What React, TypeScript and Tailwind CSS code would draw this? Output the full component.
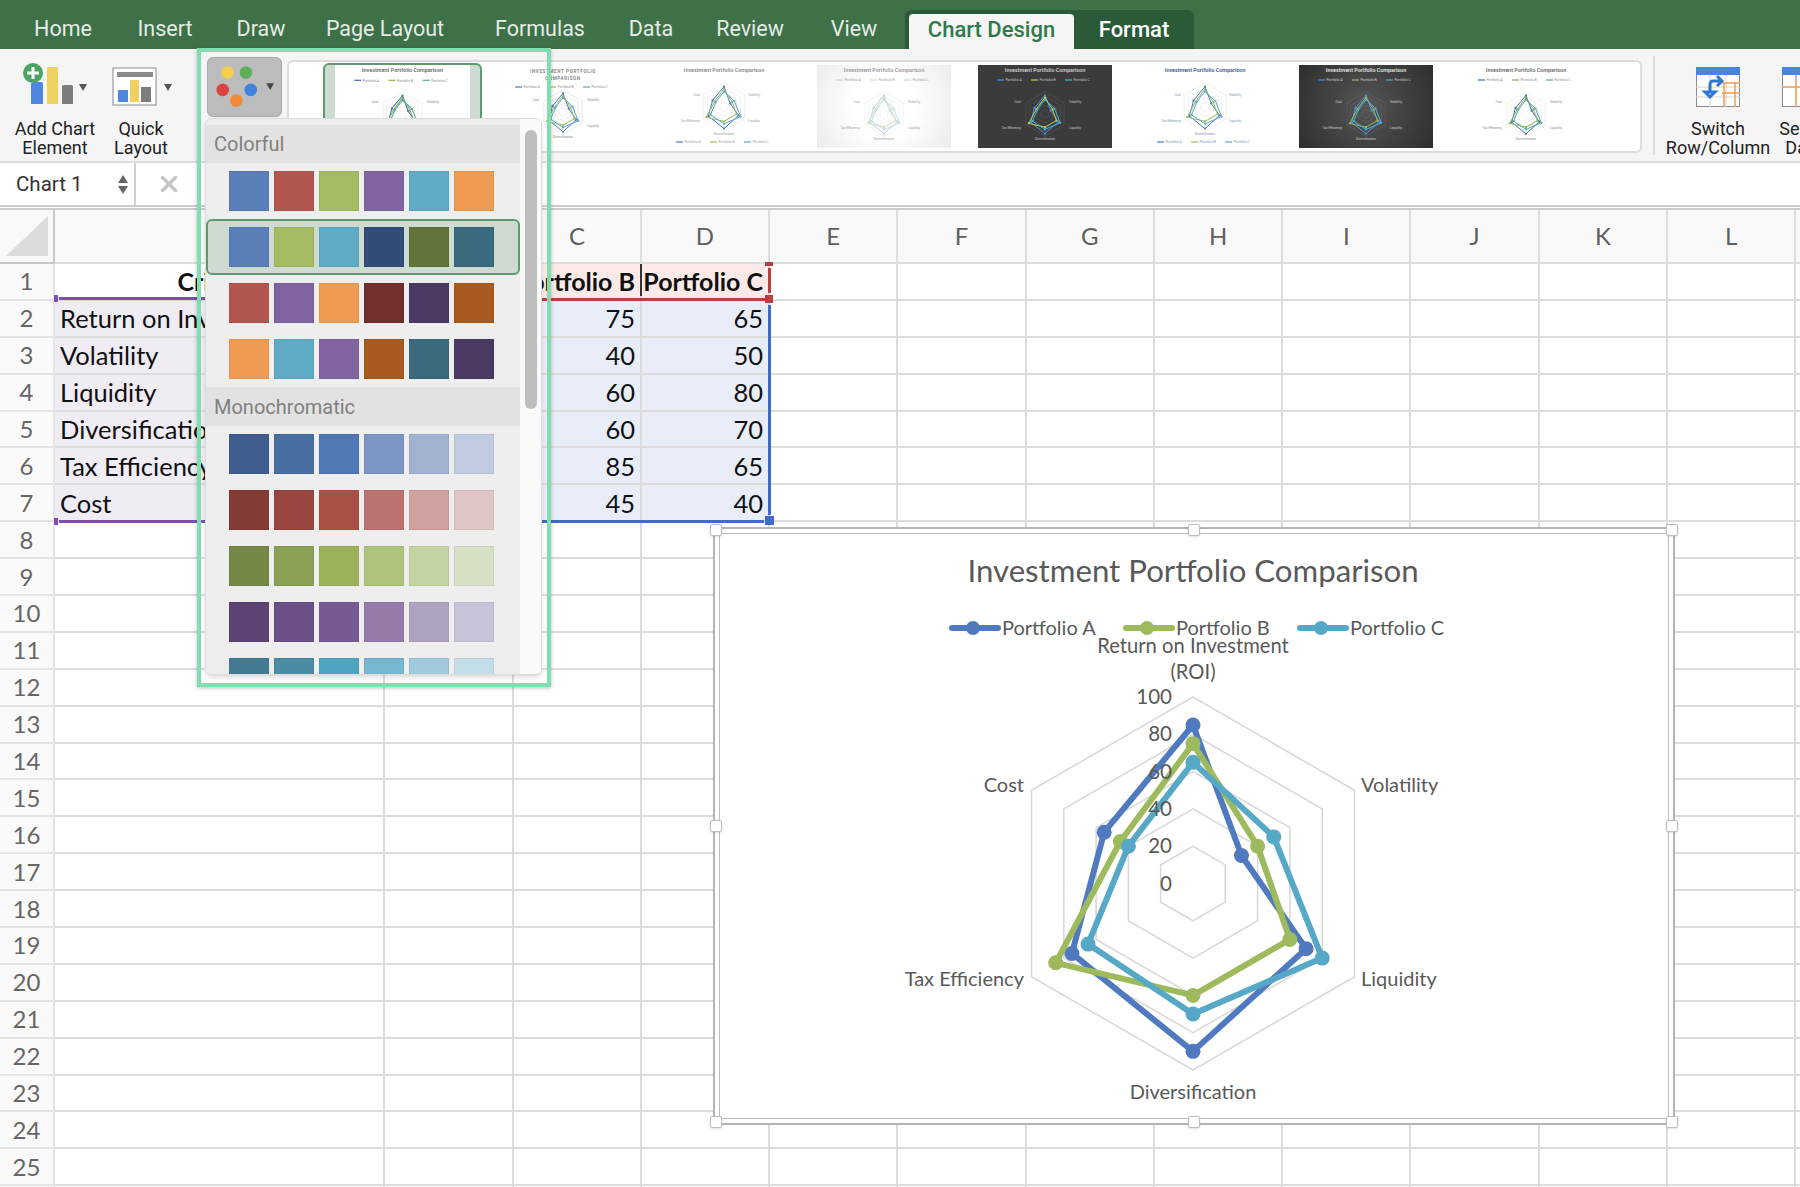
import { X } from 'lucide-react';

const TABS = [
  { label: 'Home', w: 'w-[94px]' },
  { label: 'Insert', w: 'w-[110px]' },
  { label: 'Draw', w: 'w-[82px]' },
  { label: 'Page Layout', w: 'w-[166px]' },
  { label: 'Formulas', w: 'w-[144px]' },
  { label: 'Data', w: 'w-[78px]' },
  { label: 'Review', w: 'w-[120px]' },
  { label: 'View', w: 'w-[88px]' },
];

const COLORFUL = [
  ['#5a7fb8', '#b25650', '#a3bc63', '#7f649f', '#5faac5', '#ef9c52'],
  ['#5a7fb8', '#a3bc63', '#5faac5', '#324c77', '#62743a', '#396a7d'],
  ['#b25650', '#7f649f', '#ef9c52', '#752e2e', '#4a3a63', '#a95a1e'],
  ['#ef9c52', '#5faac5', '#7f649f', '#a95a1e', '#396a7d', '#4a3a63'],
];

const MONO = [
  ['#3f5d8f', '#476f9f', '#4f78b5', '#7c95c5', '#a2b3d2', '#c2cce1'],
  ['#843b36', '#9a4640', '#ab5047', '#bc7270', '#d0a1a0', '#e0c5c6'],
  ['#768845', '#8aa055', '#9cb25a', '#aec47c', '#c3d3a2', '#d6e0c4'],
  ['#5b4373', '#6a4f88', '#775a94', '#957ca8', '#ada3c0', '#c9c3d9'],
  ['#437c92', '#4a8ca6', '#4ea5c1', '#78b5d0', '#a0c9dc', '#c3dde9'],
];

const COLUMNS = ['A', 'B', 'C', 'D', 'E', 'F', 'G', 'H', 'I', 'J', 'K', 'L', 'M'];
const ROWS = Array.from({ length: 26 }, (_, i) => i + 1);

const SHEET: Record<number, string[]> = {
  1: ['Criteria', 'Portfolio A', 'Portfolio B', 'Portfolio C'],
  2: ['Return on Investment (ROI)', '85', '75', '65'],
  3: ['Volatility', '30', '40', '50'],
  4: ['Liquidity', '70', '60', '80'],
  5: ['Diversification', '90', '60', '70'],
  6: ['Tax Efficiency', '75', '85', '65'],
  7: ['Cost', '55', '45', '40'],
};

const SERIES = [
  { name: 'Portfolio A', color: '#4f7abf', values: [85, 30, 70, 90, 75, 55] },
  { name: 'Portfolio B', color: '#9dba5c', values: [75, 40, 60, 60, 85, 45] },
  { name: 'Portfolio C', color: '#55a8c6', values: [65, 50, 80, 70, 65, 40] },
];

function point(cx: number, cy: number, r: number, i: number) {
  const a = (Math.PI / 3) * i;
  return [cx + r * Math.sin(a), cy - r * Math.cos(a)];
}

function hexPath(cx: number, cy: number, r: number) {
  return [0, 1, 2, 3, 4, 5].map((i) => point(cx, cy, r, i).map((n) => n.toFixed(1)).join(',')).join(' ');
}

const THUMBS = [
  { bg: 'bg-white', title: '#8a8a8a', axis: '#c9c9c9', text: '#8a8a8a', legend: 'top', upper: true, colors: ['#4f7abf', '#9dba5c', '#55a8c6'] },
  { bg: 'bg-white', title: '#8a8a8a', axis: '#d9d9d9', text: '#9a9a9a', legend: 'bottom', upper: false, colors: ['#4f7abf', '#9dba5c', '#55a8c6'] },
  { bg: 'bg-[radial-gradient(circle,#ffffff_40%,#ececec_100%)]', title: '#9a9a9a', axis: '#dddddd', text: '#a0a0a0', legend: 'top', upper: false, colors: ['#c3d3e8', '#d8e2bd', '#bfe0ea'] },
  { bg: 'bg-[#3b3b3b]', title: '#d0d0d0', axis: '#666666', text: '#c8c8c8', legend: 'top', upper: false, colors: ['#4f8fe0', '#c3cf4a', '#45b5dd'] },
  { bg: 'bg-white', title: '#38598f', axis: '#d9d9d9', text: '#7d93b5', legend: 'bottom', upper: false, colors: ['#4f7abf', '#9dba5c', '#55a8c6'] },
  { bg: 'bg-[radial-gradient(circle,#555555_0%,#2e2e2e_100%)]', title: '#e4e4e4', axis: '#6e6e6e', text: '#d0d0d0', legend: 'top', upper: false, colors: ['#4f8fe0', '#9dba5c', '#45b5dd'] },
  { bg: 'bg-white', title: '#6c6c6c', axis: '#dddddd', text: '#8a8a8a', legend: 'top', upper: false, colors: ['#3f6fbf', '#8fb04a', '#4fa8a0'] },
];

function MiniChart({ t }: { t: (typeof THUMBS)[number] }) {
  const cy = t.upper ? 47 : t.legend === 'top' ? 49 : 42;
  const r = t.legend === 'top' ? 22 : 24;
  const cx = 67;
  const legendY = t.legend === 'top' ? (t.upper ? 22 : 15) : 77;
  return (
    <svg viewBox="0 0 134 83" className="h-full w-full">
      {t.upper ? (
        <>
          <text x={cx} y={8} textAnchor="middle" fontSize="4.6" fontWeight="700" letterSpacing="0.6" fill={t.title}>INVESTMENT PORTFOLIO</text>
          <text x={cx} y={15} textAnchor="middle" fontSize="4.6" fontWeight="700" letterSpacing="0.6" fill={t.title}>COMPARISON</text>
        </>
      ) : (
        <text x={cx} y={7} textAnchor="middle" fontSize="5.4" fontWeight="600" fill={t.title}>Investment Portfolio Comparison</text>
      )}
      {[-34, 0, 34].map((dx, i) => (
        <g key={dx}>
          <line x1={cx + dx - 14} x2={cx + dx - 7} y1={legendY} y2={legendY} stroke={t.colors[i]} strokeWidth="1.2" />
          <text x={cx + dx - 5.5} y={legendY + 1.2} fontSize="3.4" fill={t.text}>Portfolio {'ABC'[i]}</text>
        </g>
      ))}
      {[0.2, 0.4, 0.6, 0.8, 1].map((s) => (
        <polygon key={s} points={hexPath(cx, cy, r * s)} fill="none" stroke={t.axis} strokeWidth="0.4" />
      ))}
      {SERIES.map((s, i) => (
        <g key={s.name}>
          <polygon
            points={s.values.map((v, j) => point(cx, cy, (r * v) / 100, j).map((n) => n.toFixed(1)).join(',')).join(' ')}
            fill="none"
            stroke={t.colors[i]}
            strokeWidth="1"
          />
          {s.values.map((v, j) => {
            const [x, y] = point(cx, cy, (r * v) / 100, j);
            return <circle key={j} cx={x} cy={y} r="1.1" fill={t.colors[i]} />;
          })}
        </g>
      ))}
      <text x={cx + 24} y={cy - 11} fontSize="3.2" fill={t.text}>Volatility</text>
      <text x={cx + 24} y={cy + 15} fontSize="3.2" fill={t.text}>Liquidity</text>
      <text x={cx - 24} y={cy - 11} textAnchor="end" fontSize="3.2" fill={t.text}>Cost</text>
      <text x={cx - 24} y={cy + 15} textAnchor="end" fontSize="3.2" fill={t.text}>Tax Efficiency</text>
      <text x={cx} y={cy + r + 4} textAnchor="middle" fontSize="3.2" fill={t.text}>Diversification</text>
    </svg>
  );
}

function Swatches({ rows, selected }: { rows: string[][]; selected?: number }) {
  return (
    <>
      {rows.map((row, i) => (
        <div
          key={i}
          className={
            selected === i
              ? 'flex h-[56px] items-center gap-[5px] rounded-md border-2 border-[#5f9a6e] bg-[#cddbd0] pl-[21px]'
              : 'flex h-[56px] items-center gap-[5px] pl-[23px]'
          }
        >
          {row.map((c, j) => (
            <div key={j} className="h-[40px] w-[40px] border border-black/5" style={{ backgroundColor: c }} />
          ))}
        </div>
      ))}
    </>
  );
}

function cellClass(row: number, col: number) {
  const base = 'flex items-center overflow-hidden whitespace-nowrap border-b-2 border-r-2 border-[#dcdcdc] px-[5px] text-[25.5px] text-[#111111]';
  if (row === 1 && col === 0) return `${base} justify-center bg-white font-bold text-[25px]`;
  if (row === 1 && col <= 3) return `${base} justify-end bg-[#fbeae8] font-bold text-[25px]`;
  if (row > 1 && row <= 7 && col === 0) return `${base} bg-[#efecf3]`;
  if (row > 1 && row <= 7 && col <= 3) return `${base} justify-end bg-[#e8edf8]`;
  return `${base} bg-white`;
}

function ChartHandle({ x, y }: { x: number; y: number }) {
  return (
    <div
      className="absolute h-[12px] w-[12px] -translate-x-1/2 -translate-y-1/2 rounded-[2px] border border-[#bdbdbd] bg-white shadow-sm"
      style={{ left: x, top: y }}
    />
  );
}

function RadarChart() {
  const cx = 480;
  const cy = 356.5;
  const R = 186.5;
  return (
    <svg viewBox="0 0 962 598" className="absolute inset-0 h-full w-full">
      <text x={cx} y={55} textAnchor="middle" fontSize="31.2" fill="#595959">Investment Portfolio Comparison</text>
      {SERIES.map((s, i) => {
        const x0 = [236, 410, 584][i];
        return (
          <g key={s.name}>
            <line x1={x0 + 3} x2={x0 + 49} y1={101} y2={101} stroke={s.color} strokeWidth="6" strokeLinecap="round" />
            <circle cx={x0 + 24} cy={101} r="7" fill={s.color} />
            <text x={x0 + 53} y={108} fontSize="20" fill="#595959">{s.name}</text>
          </g>
        );
      })}
      <text x={cx} y={126} textAnchor="middle" fontSize="20.2" fill="#595959">Return on Investment</text>
      <text x={cx} y={152} textAnchor="middle" fontSize="20.2" fill="#595959">(ROI)</text>
      {[0.2, 0.4, 0.6, 0.8, 1].map((s) => (
        <polygon key={s} points={hexPath(cx, cy, R * s)} fill="none" stroke="#d9d9d9" strokeWidth="1.6" />
      ))}
      {SERIES.map((s) => (
        <g key={s.name}>
          <polygon
            points={s.values.map((v, j) => point(cx, cy, (R * v) / 100, j).map((n) => n.toFixed(1)).join(',')).join(' ')}
            fill="none"
            stroke={s.color}
            strokeWidth="6"
            strokeLinejoin="round"
          />
          {s.values.map((v, j) => {
            const [x, y] = point(cx, cy, (R * v) / 100, j);
            return <circle key={j} cx={x} cy={y} r="7.5" fill={s.color} />;
          })}
        </g>
      ))}
      {[100, 80, 60, 40, 20, 0].map((n, i) => (
        <text key={n} x={459} y={177 + i * 37.3} textAnchor="end" fontSize="20.5" fill="#595959">{n}</text>
      ))}
      <text x={311} y={265} textAnchor="end" fontSize="20" fill="#595959">Cost</text>
      <text x={648} y={265} fontSize="20" fill="#595959">Volatility</text>
      <text x={311} y={459} textAnchor="end" fontSize="20" fill="#595959">Tax Efficiency</text>
      <text x={648} y={459} fontSize="20" fill="#595959">Liquidity</text>
      <text x={cx} y={572} textAnchor="middle" fontSize="20" fill="#595959">Diversification</text>
    </svg>
  );
}

export default function App() {
  return (
    <div className="relative flex h-[1187px] w-[1800px] flex-col overflow-hidden bg-white font-['Lato',sans-serif]">
      {/* Tabs */}
      <div className="flex h-[49px] shrink-0 items-end bg-[#3f7149] pl-[16px] font-['Roboto',sans-serif]">
        {TABS.map((t) => (
          <div key={t.label} className={`${t.w} flex h-[39px] items-center justify-center text-[21.5px] text-[#e4ece6]`}>
            {t.label}
          </div>
        ))}
        <div className="ml-[7px] flex h-[39px] w-[289px] items-end rounded-t-md bg-[#2b5a38] pl-[4px]">
          <div className="flex h-[35px] w-[165px] items-center justify-center rounded-t-[4px] bg-[#f5f5f5] pb-[4px] text-[22px] font-medium text-[#2f7a4b]">
            Chart Design
          </div>
          <div className="flex h-[35px] w-[120px] items-center justify-center pb-[4px] text-[22px] font-medium text-white">
            Format
          </div>
        </div>
      </div>

      {/* Ribbon */}
      <div className="flex h-[114px] shrink-0 items-start overflow-hidden border-b-2 border-[#dddddd] bg-[#f5f5f5] font-['Roboto',sans-serif] text-[18px] leading-[19px] text-[#222222]">
        <div className="flex w-[110px] shrink-0 flex-col items-center pt-[7px]">
          <svg viewBox="0 0 70 48" className="h-[48px] w-[70px]">
            <rect x="11" y="26" width="12" height="23" rx="2" fill="#4f86e0" />
            <rect x="27" y="11" width="11" height="38" rx="1.5" fill="#f0cf63" />
            <rect x="42" y="29" width="11" height="20" rx="1.5" fill="#7d7d7d" />
            <circle cx="13" cy="17" r="10" fill="#4aa564" />
            <path d="M13 11v12M7 17h12" stroke="#ffffff" strokeWidth="3" />
            <path d="M59 28l8 0-4 7z" fill="#555555" />
          </svg>
          <div className="mt-[15px] text-center">Add Chart<br />Element</div>
        </div>
        <div className="flex w-[62px] shrink-0 flex-col items-center pt-[13px]">
          <svg viewBox="0 0 66 48" className="ml-[8px] h-[48px] w-[66px]">
            <rect x="1" y="6" width="43" height="37" fill="#ffffff" stroke="#8a8a8a" />
            <rect x="5" y="10" width="36" height="5" fill="#8c8c8c" />
            <rect x="6" y="28" width="10" height="12" fill="#4f86e0" />
            <rect x="18" y="18" width="9" height="22" fill="#f0cf63" />
            <rect x="29" y="25" width="10" height="15" fill="#7d7d7d" />
            <path d="M52 22l8 0-4 7z" fill="#555555" />
          </svg>
          <div className="mt-[9px] text-center">Quick<br />Layout</div>
        </div>
        <div className="relative ml-[35px] mt-[8px] h-[60px] w-[75px] shrink-0 rounded-md border border-[#a9a9a9] bg-[#bcbcbc]">
          <svg viewBox="0 0 75 60" className="h-full w-full">
            <circle cx="20" cy="15" r="6.5" fill="#f5cf4b" />
            <circle cx="39" cy="15" r="6.5" fill="#5fae5a" />
            <circle cx="15" cy="33" r="6.5" fill="#d9433f" />
            <circle cx="44" cy="33" r="6.5" fill="#3f83e0" />
            <circle cx="29" cy="44" r="6.5" fill="#ef8b37" />
            <path d="M60 26l8 0-4 7z" fill="#444444" />
          </svg>
        </div>
        <div className="ml-[5px] mt-[11px] flex h-[93px] w-[1355px] shrink-0 items-center rounded-md border-2 border-[#dddddd] bg-white pl-[34px]">
          <div className="mr-[14px] h-[88px] w-[159px] shrink-0 rounded-md border-2 border-[#5f9a6e] bg-[#cddbd0] px-[10px]">
            <div className="h-full bg-white">
              <MiniChart t={THUMBS[6]} />
            </div>
          </div>
          {THUMBS.map((t, i) => (
            <div key={i} className={`${t.bg} mr-[26.5px] h-[83px] w-[134px] shrink-0`}>
              <MiniChart t={t} />
            </div>
          ))}
        </div>
        <div className="ml-[11px] mt-[7px] h-[99px] w-[2px] shrink-0 bg-[#dddddd]" />
        <div className="ml-[8px] flex w-[110px] shrink-0 flex-col items-center pt-[18px]">
          <svg viewBox="0 0 44 40" className="h-[40px] w-[44px]">
            <rect x="0.5" y="0.5" width="43" height="39" fill="#ffffff" stroke="#8a8a8a" />
            <rect x="0" y="0" width="44" height="8" fill="#4a86e0" />
            <path d="M0 20h44M0 30h44M14 8v32M30 8v32" stroke="#d4d4d4" />
            <path d="M26 16h18M26 26h18M28 16v24M39 16v24" stroke="#ef9c52" strokeWidth="1.5" fill="none" />
            <path d="M14 24v-7a3 3 0 0 1 3-3h8M21 9l5 5-5 5M14 30l-5-5h10z" stroke="#2f76d8" strokeWidth="3" fill="none" />
          </svg>
          <div className="mt-[12px] whitespace-nowrap text-center">Switch<br />Row/Column</div>
        </div>
        <div className="ml-[9px] flex w-[44px] shrink-0 flex-col items-center pt-[18px]">
          <svg viewBox="0 0 44 40" className="h-[40px] w-[44px] shrink-0">
            <rect x="0.5" y="0.5" width="43" height="39" fill="#ffffff" stroke="#8a8a8a" />
            <rect x="0" y="0" width="44" height="8" fill="#4a86e0" />
            <path d="M14 8v32M0 20h44" stroke="#ef9c52" strokeWidth="1.5" />
          </svg>
          <div className="mt-[12px] whitespace-nowrap text-center">Select<br />Data</div>
        </div>
      </div>

      {/* Formula bar */}
      <div className="flex h-[42px] shrink-0 items-stretch bg-white font-['Roboto',sans-serif]">
        <div className="flex w-[136px] items-center justify-between border-r-2 border-[#cfcfcf] pl-[16px] pr-[6px] text-[20.5px] text-[#333333]">
          Chart 1
          <span className="flex flex-col gap-[3px]">
            <svg viewBox="0 0 10 8" className="h-[8px] w-[10px]"><path d="M5 0l5 8H0z" fill="#666666" /></svg>
            <svg viewBox="0 0 10 8" className="h-[8px] w-[10px]"><path d="M0 0h10L5 8z" fill="#666666" /></svg>
          </span>
        </div>
        <div className="ml-[20px] flex items-center">
          <X size={26} strokeWidth={3} color="#c4c4c4" />
        </div>
      </div>
      <div className="h-[5px] shrink-0 border-y-2 border-[#cccccc] bg-white" />

      {/* Sheet */}
      <div className="grid grid-cols-[55px_330px_129px_128px_128px_repeat(9,128.3px)] auto-rows-[36.9px] grid-rows-[54px]">
        <div className="flex items-center justify-center border-b-2 border-r-2 border-[#c8c8c8] bg-[#f9f9f9]">
          <svg viewBox="0 0 42 40" className="h-[40px] w-[42px]"><path d="M42 0v40H0z" fill="#dcdcdc" /></svg>
        </div>
        {COLUMNS.map((c) => (
          <div key={c} className="flex items-center justify-center border-b-2 border-r-2 border-[#dedede] bg-[#f9f9f9] text-[24px] text-[#5f5f5f]">
            {c}
          </div>
        ))}
        {ROWS.map((r) => (
          <div key={r} className="contents">
            <div className="flex items-center justify-center border-b-2 border-r-2 border-[#e4e4e4] bg-[#fafafa] text-[24px] text-[#666666]">
              {r}
            </div>
            {COLUMNS.map((c, ci) => (
              <div key={c} className={cellClass(r, ci)}>
                {SHEET[r]?.[ci]}
              </div>
            ))}
          </div>
        ))}
      </div>

      {/* Range highlights */}
      <div className="absolute left-[59px] top-[297px] h-[3px] w-[200px] bg-[#7a50b5]" />
      <div className="absolute left-[59px] top-[520px] h-[3px] w-[200px] bg-[#7a50b5]" />
      <div className="absolute left-[54px] top-[295px] h-[7px] w-[4px] bg-[#7a50b5]" />
      <div className="absolute left-[54px] top-[518px] h-[7px] w-[4px] bg-[#7a50b5]" />
      <div className="absolute left-[513px] top-[298px] h-[3px] w-[252px] bg-[#b84040]" />
      <div className="absolute left-[768px] top-[268px] h-[25px] w-[3px] bg-[#b84040]" />
      <div className="absolute left-[765px] top-[262px] h-[4px] w-[8px] bg-[#b84040]" />
      <div className="absolute left-[765px] top-[295px] h-[8px] w-[8px] bg-[#b84040]" />
      <div className="absolute left-[640px] top-[264px] h-[32px] w-[2px] bg-[#333333]" />
      <div className="absolute left-[768px] top-[305px] h-[210px] w-[3px] bg-[#3f6cc8]" />
      <div className="absolute left-[513px] top-[520px] h-[3px] w-[251px] bg-[#3f6cc8]" />
      <div className="absolute left-[765px] top-[516px] h-[9px] w-[9px] bg-[#3f6cc8]" />

      {/* Chart */}
      <div className="absolute left-[713px] top-[527px] h-[598px] w-[962px] border-2 border-[#b5b5b5] bg-white p-[4px]">
        <div className="h-full w-full border border-[#bdbdbd]" />
      </div>
      <div className="absolute left-[713px] top-[527px] h-[598px] w-[962px]">
        <RadarChart />
      </div>
      {[716, 1194, 1672].map((x) =>
        [530, 826, 1122].map((y) => (x === 1194 && y === 826 ? null : <ChartHandle key={`${x}-${y}`} x={x} y={y} />)),
      )}

      {/* Chart colors dropdown */}
      <div className="absolute left-[205px] top-[118px] flex h-[557px] w-[337px] overflow-hidden rounded-md border border-[#dcdcdc] bg-[#eeeeee] pt-[6px] shadow-md font-['Roboto',sans-serif]">
        <div className="h-full w-[314px] shrink-0">
          <div className="flex h-[38px] items-center bg-[#e2e2e2] pl-[8px] text-[20px] text-[#808080]">Colorful</div>
          <Swatches rows={COLORFUL} selected={1} />
          <div className="flex h-[39px] items-center bg-[#e2e2e2] pl-[8px] text-[20px] text-[#808080]">Monochromatic</div>
          <Swatches rows={MONO} />
        </div>
        <div className="-mt-[6px] flex-1 bg-[#fafafa] px-[5px] pt-[11px]">
          <div className="h-[279px] w-[12px] rounded-full bg-[#bdbdbd]" />
        </div>
      </div>

      {/* Highlight frame */}
      <div className="absolute left-[197px] top-[48px] h-[639px] w-[354px] border-[4px] border-[#7ee0ae] shadow-[0_1px_4px_rgba(0,0,0,0.25)]" />
    </div>
  );
}
